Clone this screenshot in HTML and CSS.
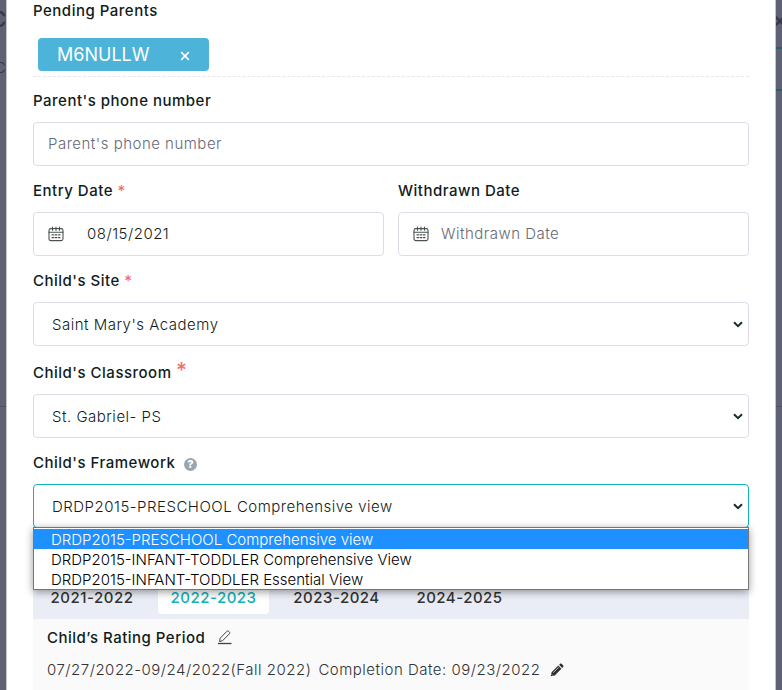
FILE: index.html
```html
<!DOCTYPE html>
<html lang="en">
<head>
<meta charset="utf-8">
<title>Child profile</title>
<link rel="stylesheet" href="styles.css">
</head>
<body>
<svg class="defs" width="0" height="0" aria-hidden="true">
  <symbol id="calendar" viewBox="0 0 16 16">
    <g fill="none" stroke="#4a5352" stroke-width="1.1" stroke-linecap="round">
      <rect x="1" y="2.6" width="14" height="12" rx="1.8"/>
      <path d="M1 6.2h14M4.5 1v3.2M8 1v3.2M11.5 1v3.2"/>
      <path d="M4 8.8h1.6M7.2 8.8h1.6M10.4 8.8H12M4 11.6h1.6M7.2 11.6h1.6M10.4 11.6H12" stroke-width="1.3"/>
    </g>
  </symbol>
  <symbol id="chevron" viewBox="0 0 10 7">
    <path d="M1 1.3l4 3.8 4-3.8" fill="none" stroke="#172b2b" stroke-width="2"/>
  </symbol>
</svg>
<div class="behind">
  <span class="ghost ghost-title">C</span>
  <span class="ghost ghost-sub">C</span>
  <span class="ghost ghost-close">×</span>
  <span class="ghost-button"></span>
  <span class="ghost-rule"></span>
</div>
<main class="modal">
  <div class="label label-first">Pending Parents</div>
  <div class="tags"><span class="tag">M6NULLW<svg class="tag-x" viewBox="0 0 10 10"><path d="M1.2 1.2l7.6 7.6M8.8 1.2L1.2 8.8" stroke="#fff" stroke-width="1.7"/></svg></span></div>
  <div class="label label-phone">Parent's phone number</div>
  <div class="field placeholder">Parent's phone number</div>
  <div class="dates">
    <div>
      <div class="label">Entry Date <span class="req">*</span></div>
      <div class="field date"><svg class="cal"><use href="#calendar"/></svg><span class="entry">08/15/2021</span></div>
    </div>
    <div>
      <div class="label">Withdrawn Date</div>
      <div class="field date placeholder"><svg class="cal"><use href="#calendar"/></svg><span>Withdrawn Date</span></div>
    </div>
  </div>
  <div class="label">Child's Site <span class="req">*</span></div>
  <div class="field select"><span>Saint Mary's Academy</span><svg class="chev"><use href="#chevron"/></svg></div>
  <div class="label label-class">Child's Classroom <span class="req req-big">*</span></div>
  <div class="field select"><span>St. Gabriel- PS</span><svg class="chev"><use href="#chevron"/></svg></div>
  <div class="label">Child's Framework <span class="help">?</span></div>
  <div class="framework">
    <div class="field select active"><span>DRDP2015-PRESCHOOL Comprehensive view</span><svg class="chev"><use href="#chevron"/></svg></div>
    <div class="menu">
      <div class="option selected">DRDP2015-PRESCHOOL Comprehensive view</div>
      <div class="option">DRDP2015-INFANT-TODDLER Comprehensive View</div>
      <div class="option">DRDP2015-INFANT-TODDLER Essential View</div>
    </div>
  </div>
  <section class="periods">
    <div class="tabs">
      <span class="tab">2021-2022</span><span class="tab current">2022-2023</span><span class="tab">2023-2024</span><span class="tab">2024-2025</span>
    </div>
    <div class="panel">
      <div class="rating">Child’s Rating Period<svg class="edit" viewBox="0 0 15 15"><g fill="none" stroke="#3b4444" stroke-width="1"><path d="M2.6 11.5l.5-3.2 6.7-6.9c.6-.6 1.4-.6 2 0l.5.5c.6.6.6 1.4 0 2L5.6 10.700z"/><path d="M1 13.500h13.500" stroke-width="1.300"/></g></svg></div>
      <div class="range"><span>07/27/2022-09/24/2022(Fall 2022)</span><span class="completion">Completion Date: 09/23/2022</span><svg class="pencil" viewBox="0 0 14 14"><path d="M.7 13.300l.9-4L8.300 2.600l3.100 3.100-6.700 6.700zM9.100 1.800l.9-.9c.5-.5 1.200-.5 1.700 0l1.400 1.400c.5.5.5 1.200 0 1.700l-.9.9z" fill="#2d2d33"/><path d="M3.200 9.700l5.600-5.600" stroke="#fafafa" stroke-width=".7"/><path d="M1.500 11.200l1.300 1.300" stroke="#fafafa" stroke-width=".6"/></svg></div>
    </div>
  </section>
</main>
</body>
</html>
```
FILE: styles.css
```css
* { box-sizing: border-box; }
body {
  margin: 0;
  height: 690px;
  overflow: hidden;
  position: relative;
  background: #5f6272;
  font: 300 15px/20px Inter, sans-serif;
  letter-spacing: 0.5px;
  color: #111c1c;
}
.defs { position: absolute; }
.behind { position: absolute; inset: 0; overflow: hidden; }
.ghost { position: absolute; color: #353847; }
.ghost-title { left: -9px; top: 10px; font-size: 21px; font-weight: 500; }
.ghost-sub { left: -5px; top: 58px; font-size: 15px; }
.ghost-close { left: 773px; top: 10px; font-size: 20px; font-weight: 600; }
.ghost-button { position: absolute; left: 760px; top: 47px; width: 40px; height: 44px; border: 2px solid #2b5d6b; }
.ghost-rule { position: absolute; left: 0; right: 0; top: 406px; height: 1px; background: #50535f; }
.modal {
  position: relative;
  height: 690px;
  margin: 0 6px;
  padding: 0 26px;
  background: #fff;
  border: solid #c3c4cb;
  border-width: 0 1px;
}
.label {
  height: 46px;
  line-height: 50px;
  font-weight: 500;
  white-space: nowrap;
}
.label-first { height: 38px; line-height: 22px; }
.label-phone { height: 45px; line-height: 48px; }
.label-class { height: 48px; line-height: 53px; }
.req { color: #f56c6c; }
.req-big { font-size: 21px; line-height: 20px; }
.tags { height: 39px; padding-left: 5px; border-bottom: 1px dashed #e8e8ec; }
.tag {
  display: flex;
  align-items: center;
  justify-content: space-between;
  width: 171px;
  height: 33px;
  padding: 0 19px;
  border-radius: 4px;
  background: #4db3d8;
  color: #fff;
  font-size: 18px;
  font-weight: 400;
  letter-spacing: 0;
}
.tag-x { width: 10px; height: 10px; margin-top: 3px; }
.field {
  display: flex;
  align-items: center;
  height: 44px;
  padding: 0 14px;
  border: 1px solid #dcdde6;
  border-radius: 4px;
  background: #fff;
  white-space: nowrap;
}
.placeholder { color: #676879; }
.dates { display: grid; grid-template-columns: 351px 351px; gap: 14px; }
.cal { width: 16px; height: 16px; margin-right: 12px; }
.entry { margin-left: 11px; }
.select { justify-content: space-between; padding: 1px 5px 0 18px; }
.chev { width: 10px; height: 7px; }
.active { border-color: #10b3b7; }
.help {
  display: inline-flex;
  align-items: center;
  justify-content: center;
  width: 13px;
  height: 13px;
  margin-left: 4px;
  border-radius: 50%;
  background: #98a6ad;
  color: #fff;
  font-size: 11px;
  font-weight: 800;
  letter-spacing: 0;
  line-height: 13px;
}
.framework { position: relative; }
.menu {
  position: absolute;
  z-index: 1;
  left: 0;
  right: 0;
  top: 43px;
  height: 63px;
  padding-top: 1px;
  border: 1px solid #767676;
  background: #fff;
  box-shadow: 0 2px 8px rgba(0, 0, 0, 0.4);
  letter-spacing: 0;
  color: #000;
}
.option { height: 20px; padding-left: 17px; line-height: 21px; }
.selected { background: #1e90ff; color: #fff; }
.periods { margin-top: 44px; height: 118px; background: #fafafa; }
.tabs { display: flex; height: 47px; padding: 10px 5px 0; background: #eaedf5; }
.tab { width: 111px; height: 32px; margin-right: 12px; border-radius: 4px; text-align: center; line-height: 32px; font-weight: 500; color: #333; }
.tab:first-child { width: 108px; }
.current { background: #fff; color: #10b3b7; }
.panel { padding: 9px 14px; }
.rating { display: flex; height: 32px; font-weight: 500; }
.edit { width: 15px; height: 15px; margin: 2px 0 0 12px; }
.range { display: flex; color: #333; }
.completion { margin-left: 7px; }
.pencil { width: 14px; height: 14px; margin: 3px 0 0 10px; }
```
